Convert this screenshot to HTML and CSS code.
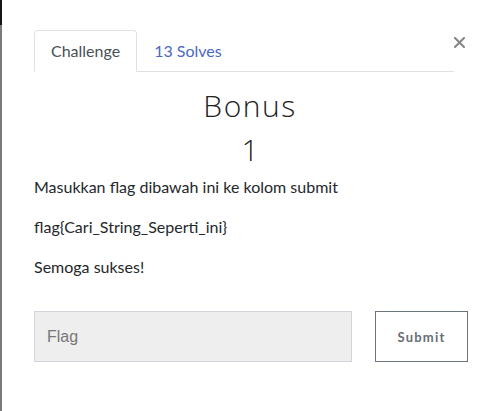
FILE: index.html
```html
<!DOCTYPE html>
<html lang="id">
<head>
<meta charset="utf-8">
<title>Bonus</title>
<link rel="stylesheet" href="styles.css">
</head>
<body>
<div class="page">
  <div class="edge"></div>
  <div class="modal">
    <div class="header">
      <ul class="tabs">
        <li class="tab active">Challenge</li>
        <li class="tab link">13 Solves</li>
      </ul>
      <button class="close" aria-label="Close">
        <svg width="11" height="11" viewBox="0 0 11 11"><path d="M1 1L10 10M10 1L1 10" stroke="#858585" stroke-width="2" stroke-linecap="square"/></svg>
      </button>
    </div>
    <h3 class="name">Bonus</h3>
    <h4 class="value">1</h4>
    <div class="desc">
      <p>Masukkan flag dibawah ini ke kolom submit</p>
      <p>flag{Cari_String_Seperti_ini}</p>
      <p>Semoga sukses!</p>
    </div>
    <form class="submit-row">
      <input class="flag-input" type="text" placeholder="Flag">
      <button class="submit-btn" type="button">Submit</button>
    </form>
  </div>
</div>
</body>
</html>
```
FILE: styles.css
```css
html, body {
  margin: 0;
  padding: 0;
  background: #fff;
}
.page {
  display: flex;
  min-height: 411px;
}
.edge {
  width: 2px;
  flex: none;
  background: linear-gradient(#161616 0 25px, #7a7a7a 25px);
}
.modal {
  flex: 1;
  padding: 30px 32px 0 32px;
  font-family: Lato, "Liberation Sans", sans-serif;
  color: #212529;
}
.header {
  display: flex;
  align-items: flex-start;
}
.tabs {
  flex: 1;
  display: flex;
  list-style: none;
  margin: 0;
  padding: 0;
  border-bottom: 1px solid #dee2e6;
}
.tab {
  font-size: 16px;
  line-height: 24px;
  padding: 8px 16px;
  border: 1px solid transparent;
  border-radius: 4px 4px 0 0;
  margin-bottom: -1px;
}
.tab.active {
  color: #495057;
  background: #fff;
  border-color: #dee2e6 #dee2e6 #fff;
}
.tab.link {
  color: #4a69c4;
}
.close {
  flex: none;
  width: 12px;
  height: 11px;
  padding: 0;
  margin: 7px 0 0 0;
  border: 0;
  background: none;
  display: flex;
}
.name {
  margin: 16px 0 8px;
  text-align: center;
  font-family: "Open Sans", sans-serif;
  font-weight: 300;
  font-size: 30px;
  line-height: 36px;
  letter-spacing: 1.5px;
  color: #222;
}
.value {
  margin: 0 0 7px;
  text-align: center;
  font-family: "Open Sans", sans-serif;
  font-weight: 300;
  font-size: 30px;
  line-height: 36px;
  color: #222;
}
.desc p {
  margin: 0 0 16px;
  font-size: 16px;
  line-height: 24px;
  color: #24272b;
}
.submit-row {
  display: flex;
  gap: 23px;
  margin: 32px -2px 0 0;
}
.flag-input {
  box-sizing: border-box;
  width: 318px;
  height: 51px;
  padding: 0 12px;
  border: 1px solid #d2d6dc;
  background: #eeeeee;
  font-family: "Liberation Sans", Arial, sans-serif;
  font-size: 16px;
  color: #495057;
  outline: none;
}
.flag-input::placeholder {
  color: #777;
}
.submit-btn {
  box-sizing: border-box;
  width: 93px;
  height: 51px;
  border: 1px solid #6c757d;
  background: #fff;
  font-family: Lato, sans-serif;
  font-weight: 700;
  font-size: 13px;
  letter-spacing: 1.2px;
  color: #686e75;
  padding: 0;
}
```
